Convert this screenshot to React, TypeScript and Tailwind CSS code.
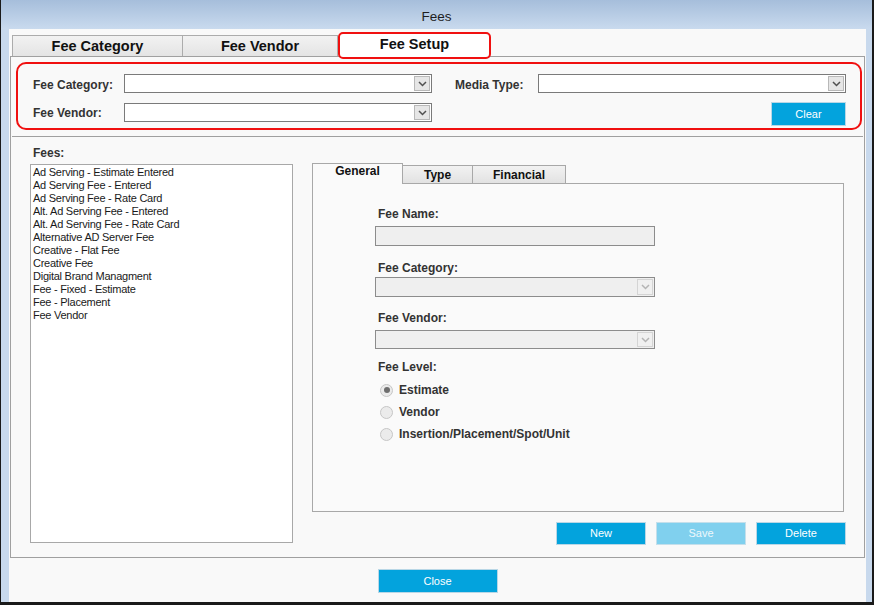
import React from "react";

const Chevron = ({ disabled }: { disabled?: boolean }) => (
  <svg width="9" height="6" viewBox="0 0 9 6">
    <polyline
      points="1,1 4.5,4.5 8,1"
      fill="none"
      stroke={disabled ? "#b4b4b4" : "#505050"}
      strokeWidth="1.5"
    />
  </svg>
);

function Combo({ className, disabled }: { className: string; disabled?: boolean }) {
  return (
    <div
      className={`flex p-px border ${className} ${
        disabled ? "border-[#8c8c8c] bg-[#efefef]" : "border-[#7a7a7a] bg-white"
      }`}
    >
      <div
        className={`ml-auto w-[16px] h-full flex items-center justify-center border ${
          disabled ? "border-[#d4d4d4] bg-[#f0f0f0]" : "border-[#b8b8b8] bg-[#e6e6e6]"
        }`}
      >
        <Chevron disabled={disabled} />
      </div>
    </div>
  );
}

function Radio({ label, checked }: { label: string; checked?: boolean }) {
  return (
    <div className="flex items-center h-[22px]">
      <div className="ml-[67px] w-[13px] h-[13px] rounded-full border border-[#c6c6c6] bg-[#ebebeb] flex items-center justify-center">
        {checked && <div className="w-[6px] h-[6px] rounded-full bg-[#6e6e6e]" />}
      </div>
      <span className="ml-[6px] text-[12px] font-bold text-[#333]">{label}</span>
    </div>
  );
}

const fees = [
  "Ad Serving - Estimate Entered",
  "Ad Serving Fee - Entered",
  "Ad Serving Fee - Rate Card",
  "Alt. Ad Serving Fee - Entered",
  "Alt. Ad Serving Fee - Rate Card",
  "Alternative AD Server Fee",
  "Creative - Flat Fee",
  "Creative Fee",
  "Digital Brand Managment",
  "Fee - Fixed - Estimate",
  "Fee - Placement",
  "Fee Vendor",
];

export default function App() {
  return (
    <div className="w-[874px] h-[605px] bg-[#1a1a1a] pl-px pr-[2px] pb-[3px] font-['Liberation_Sans',Arial,sans-serif] overflow-hidden">
      <div className="w-full h-full flex flex-col bg-[#c8d9ed]">
        {/* Title bar */}
        <div className="h-[29px] shrink-0 bg-gradient-to-b from-[#a6bedb] to-[#c9daee] flex items-center justify-center">
          <span className="text-[13.5px] text-[#1e1e1e] pt-[6px]">Fees</span>
        </div>
        {/* Body */}
        <div className="flex-1 ml-[8px] mr-[6px] bg-[#f9f9f9] flex flex-col">
          {/* Main tabs */}
          <div className="flex items-end h-[27px] pt-[3px] pl-[3px]">
            <div className="w-[171px] h-[21px] border border-b-0 border-[#acacac] bg-gradient-to-b from-[#f2f2f2] to-[#e4e4e4] flex items-center justify-center pt-[2px] text-[14.5px] font-bold text-[#111]">
              Fee Category
            </div>
            <div className="w-[155px] h-[21px] border border-l-0 border-b-0 border-[#acacac] bg-gradient-to-b from-[#f2f2f2] to-[#e4e4e4] flex items-center justify-center pt-[2px] text-[14.5px] font-bold text-[#111]">
              Fee Vendor
            </div>
            <div className="relative z-10 -mb-[3px] w-[153px] h-[27px] border-2 border-[#f01010] rounded-[5px] bg-white flex items-start justify-center pt-0 leading-[20px] text-[14.5px] font-bold text-[#111]">
              Fee Setup
            </div>
          </div>
          {/* Panel */}
          <div className="mx-px h-[502px] border border-[#a0a0a0] bg-[#f9f9f9] flex flex-col">
            {/* Filter box */}
            <div className="mt-[5px] ml-[5px] w-[846px] h-[68px] border-2 border-[#f01010] rounded-[10px] flex flex-col">
              <div className="mt-[10px] flex items-center h-[19px]">
                <span className="pl-[15px] w-[106px] text-[12px] font-bold text-[#333] pt-[2px]">Fee Category:</span>
                <Combo className="w-[308px] h-[19px]" />
                <span className="ml-[23px] w-[83px] text-[12px] font-bold text-[#333] pt-[2px]">Media Type:</span>
                <Combo className="w-[308px] h-[19px]" />
              </div>
              <div className="mt-[9px] flex items-start">
                <span className="pl-[15px] w-[106px] text-[12px] font-bold text-[#333] leading-[19px] mt-[2px]">Fee Vendor:</span>
                <Combo className="w-[308px] h-[19px] mt-px" />
                <div className="ml-auto mr-[14px] w-[75px] h-[24px] bg-[#03a3dd] border border-[#b9d7e6] flex items-center justify-center text-[11px] text-white">
                  Clear
                </div>
              </div>
            </div>
            {/* Separator */}
            <div className="mt-[6px] ml-px w-[851px] h-px bg-[#a0a0a0]" />
            {/* Content */}
            <div className="mt-[9px] flex">
              <div className="ml-[19px] flex flex-col">
                <span className="pl-[3px] h-[13px] leading-[13px] text-[12px] font-bold text-[#333] pt-px">Fees:</span>
                <div className="mt-[5px] w-[263px] h-[379px] border border-[#a8a8a8] bg-white pt-px pl-[2px]">
                  {fees.map((f) => (
                    <div key={f} className="h-[13px] leading-[13px] text-[11px] tracking-[-0.25px] text-[#1a1a1a] whitespace-nowrap">
                      {f}
                    </div>
                  ))}
                </div>
              </div>
              <div className="ml-[19px] pt-[17px] w-[534px] flex flex-col">
                {/* inner tabs */}
                <div className="flex items-end h-[20px]">
                  <div className="relative z-10 -mb-px w-[91px] h-[21px] border border-b-0 border-[#a8a8a8] bg-[#fafafa] flex items-start justify-center text-[12px] leading-[15px] font-bold text-[#111]">
                    General
                  </div>
                  <div className="w-[70px] h-[18px] border border-l-0 border-b-0 border-[#a8a8a8] bg-gradient-to-b from-[#f2f2f2] to-[#e2e2e2] flex items-center justify-center text-[12px] font-bold text-[#111]">
                    Type
                  </div>
                  <div className="w-[93px] h-[18px] border border-l-0 border-b-0 border-[#a8a8a8] bg-gradient-to-b from-[#f2f2f2] to-[#e2e2e2] flex items-center justify-center text-[12px] font-bold text-[#111]">
                    Financial
                  </div>
                </div>
                <div className="w-[532px] h-[329px] border border-[#a8a8a8] bg-[#fafafa] flex flex-col">
                  <span className="mt-[23px] ml-[65px] h-[14px] leading-[14px] text-[12px] font-bold text-[#333]">Fee Name:</span>
                  <div className="mt-[5px] ml-[62px] w-[280px] h-[20px] border border-[#8c8c8c] bg-[#efefef]" />
                  <span className="mt-[15px] ml-[65px] h-[14px] leading-[14px] text-[12px] font-bold text-[#333]">Fee Category:</span>
                  <div className="mt-[2px] ml-[62px]">
                    <Combo className="w-[280px] h-[20px]" disabled />
                  </div>
                  <span className="mt-[14px] ml-[65px] h-[14px] leading-[14px] text-[12px] font-bold text-[#333]">Fee Vendor:</span>
                  <div className="mt-[5px] ml-[62px]">
                    <Combo className="w-[280px] h-[19px]" disabled />
                  </div>
                  <span className="mt-[11px] ml-[65px] h-[14px] leading-[14px] text-[12px] font-bold text-[#333]">Fee Level:</span>
                  <div className="mt-[5px] flex flex-col">
                    <Radio label="Estimate" checked />
                    <Radio label="Vendor" />
                    <Radio label="Insertion/Placement/Spot/Unit" />
                  </div>
                </div>
                <div className="mt-[10px] flex justify-end gap-[10px]">
                  <div className="w-[90px] h-[23px] bg-[#03a3dd] border border-[#b9d7e6] flex items-center justify-center text-[11px] text-white">New</div>
                  <div className="w-[90px] h-[23px] bg-[#80d0ee] border border-[#c4dfeb] flex items-center justify-center text-[11px] text-[#eef8fc]">Save</div>
                  <div className="w-[90px] h-[23px] bg-[#03a3dd] border border-[#b9d7e6] flex items-center justify-center text-[11px] text-white">Delete</div>
                </div>
              </div>
            </div>
          </div>
          {/* Close */}
          <div className="mt-[11px] flex justify-center">
            <div className="w-[120px] h-[24px] bg-[#03a3dd] border border-[#b9d7e6] flex items-center justify-center text-[11px] text-white">
              Close
            </div>
          </div>
        </div>
      </div>
    </div>
  );
}
